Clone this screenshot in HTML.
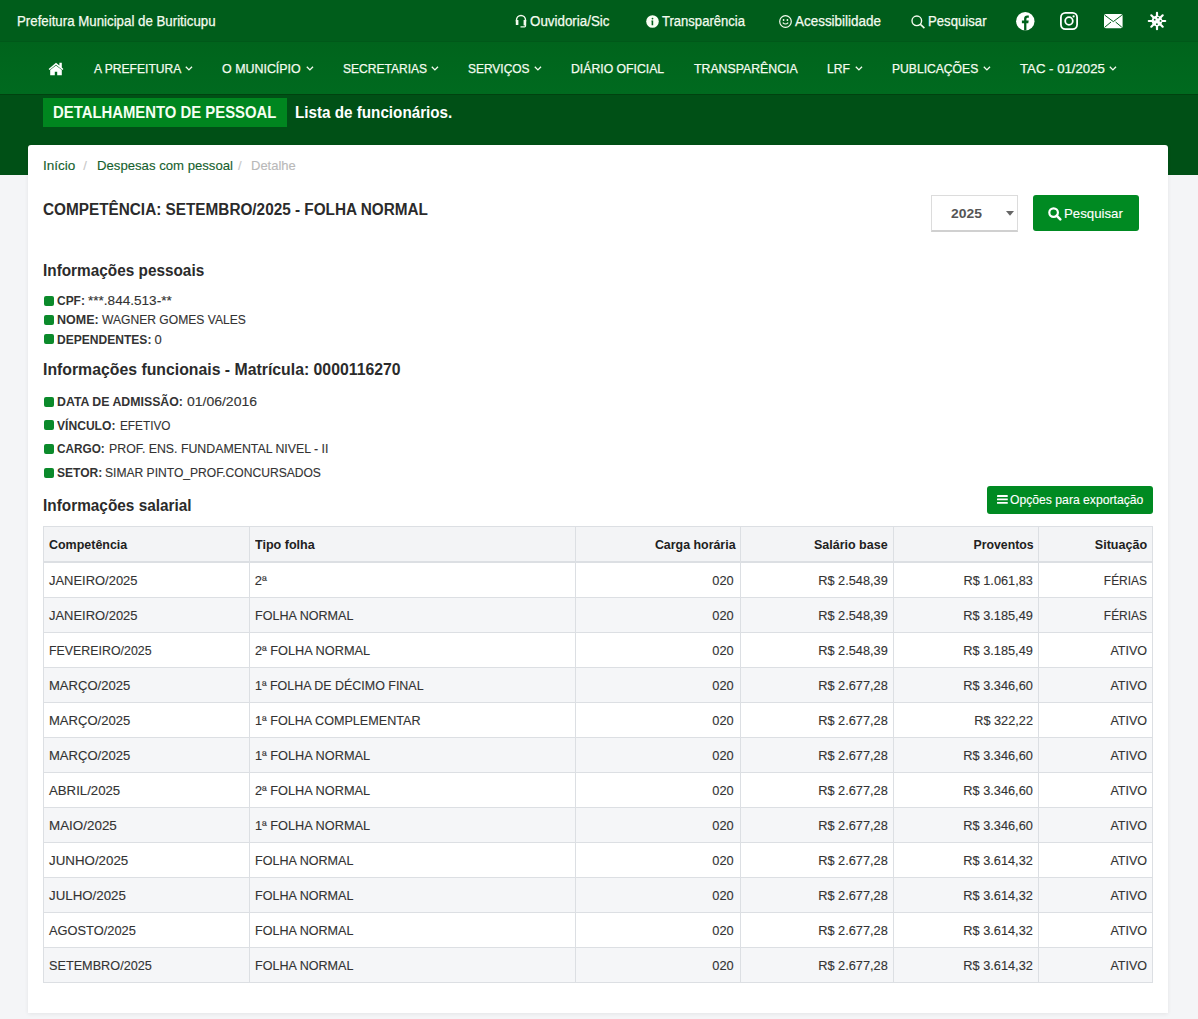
<!DOCTYPE html>
<html lang="pt-BR"><head><meta charset="utf-8">
<title>Detalhamento de Pessoal</title>
<style>
html,body{margin:0;padding:0}
body{width:1198px;height:1019px;position:relative;overflow:hidden;background:#f4f5f7;font-family:"Liberation Sans",sans-serif}
.a{position:absolute}
.t{position:absolute;white-space:nowrap;font-family:"Liberation Sans",sans-serif}
#top{left:0;top:0;width:1198px;height:42px;background:#005d1b}
#nav{left:0;top:42px;width:1198px;height:52px;background:linear-gradient(#00641c,#006a1f)}
#band{left:0;top:94px;width:1198px;height:81px;background:#005016;border-top:1px solid #00420f;box-sizing:border-box}
#label{left:43px;top:98px;width:244px;height:29px;background:#00861f}
#card{left:28px;top:145px;width:1140px;height:868px;background:#fff;border-radius:3px 3px 0 0;box-shadow:0 1px 4px rgba(0,0,0,.07)}
#sel{left:931px;top:195px;width:85px;height:34px;border:1px solid #dcdcdc;border-bottom:2px solid #d0d0d0;background:#fff}
#btn{left:1033px;top:195px;width:106px;height:36px;background:#008a22;border-radius:3px}
#exp{left:987px;top:486px;width:166px;height:28px;background:#008a22;border-radius:3px}
.sq{position:absolute;left:43.5px;width:10.5px;height:10px;background:#0b8a2b;border-radius:2px}
#tbl{left:43px;top:526px;width:1110px;height:456px}
.hl{position:absolute;background:#dcdfe3}
.row{position:absolute;left:43px;width:1110px;height:35px}
svg{position:absolute;overflow:visible}
</style></head><body>
<div id="top" class="a"></div>
<div id="nav" class="a"></div>
<div class="a" style="left:0;top:41px;width:1198px;height:1px;background:#005819"></div>
<div id="band" class="a"></div>
<div id="label" class="a"></div>
<div id="card" class="a"></div>
<div id="sel" class="a"></div>
<div id="btn" class="a"></div>
<div id="exp" class="a"></div>

<!-- squares -->
<div class="sq" style="top:295.5px"></div>
<div class="sq" style="top:314.5px"></div>
<div class="sq" style="top:334px"></div>
<div class="sq" style="top:396.5px"></div>
<div class="sq" style="top:420px"></div>
<div class="sq" style="top:444px"></div>
<div class="sq" style="top:468px"></div>

<!-- table backgrounds -->
<div class="row" style="top:526px;height:36px;background:#f3f4f6"></div>
<div class="row" style="top:597px;background:#f5f6f8"></div>
<div class="row" style="top:667px;background:#f5f6f8"></div>
<div class="row" style="top:737px;background:#f5f6f8"></div>
<div class="row" style="top:807px;background:#f5f6f8"></div>
<div class="row" style="top:877px;background:#f5f6f8"></div>
<div class="row" style="top:947px;background:#f5f6f8"></div>
<!-- table lines -->
<div class="hl" style="left:43px;top:526px;width:1110px;height:1px"></div>
<div class="hl" style="left:43px;top:561px;width:1110px;height:2px"></div>
<div class="hl" style="left:43px;top:597px;width:1110px;height:1px"></div>
<div class="hl" style="left:43px;top:632px;width:1110px;height:1px"></div>
<div class="hl" style="left:43px;top:667px;width:1110px;height:1px"></div>
<div class="hl" style="left:43px;top:702px;width:1110px;height:1px"></div>
<div class="hl" style="left:43px;top:737px;width:1110px;height:1px"></div>
<div class="hl" style="left:43px;top:772px;width:1110px;height:1px"></div>
<div class="hl" style="left:43px;top:807px;width:1110px;height:1px"></div>
<div class="hl" style="left:43px;top:842px;width:1110px;height:1px"></div>
<div class="hl" style="left:43px;top:877px;width:1110px;height:1px"></div>
<div class="hl" style="left:43px;top:912px;width:1110px;height:1px"></div>
<div class="hl" style="left:43px;top:947px;width:1110px;height:1px"></div>
<div class="hl" style="left:43px;top:982px;width:1110px;height:1px"></div>
<div class="hl" style="left:43px;top:526px;width:1px;height:457px"></div>
<div class="hl" style="left:249px;top:526px;width:1px;height:457px"></div>
<div class="hl" style="left:575px;top:526px;width:1px;height:457px"></div>
<div class="hl" style="left:740px;top:526px;width:1px;height:457px"></div>
<div class="hl" style="left:893px;top:526px;width:1px;height:457px"></div>
<div class="hl" style="left:1038px;top:526px;width:1px;height:457px"></div>
<div class="hl" style="left:1152px;top:526px;width:1px;height:457px"></div>

<!-- icons -->
<!-- home -->
<svg style="left:48px;top:62px" width="16" height="14" viewBox="0 0 16 14">
<path d="M8 0.8 L0.6 7 L1.6 8.1 L8 2.8 L14.4 8.1 L15.4 7 L13.8 5.6 L13.8 0.7 L11.4 0.7 L11.4 3.6 Z" fill="#fff"/>
<path d="M2.2 8 L8 3.4 L13.8 8 L13.8 13.3 L9.2 13.3 L9.2 9.8 L6.8 9.8 L6.8 13.3 L2.2 13.3 Z" fill="#fff"/>
</svg>
<!-- chevrons -->
<svg style="left:185px;top:66px" width="8" height="5" viewBox="0 0 8 5"><path d="M0.8 0.8 L3.9 3.9 L7 0.8" stroke="#f4fbef" stroke-width="1.35" fill="none"/></svg>
<svg style="left:305.5px;top:66px" width="8" height="5" viewBox="0 0 8 5"><path d="M0.8 0.8 L3.9 3.9 L7 0.8" stroke="#f4fbef" stroke-width="1.35" fill="none"/></svg>
<svg style="left:431px;top:66px" width="8" height="5" viewBox="0 0 8 5"><path d="M0.8 0.8 L3.9 3.9 L7 0.8" stroke="#f4fbef" stroke-width="1.35" fill="none"/></svg>
<svg style="left:534px;top:66px" width="8" height="5" viewBox="0 0 8 5"><path d="M0.8 0.8 L3.9 3.9 L7 0.8" stroke="#f4fbef" stroke-width="1.35" fill="none"/></svg>
<svg style="left:854.6px;top:66px" width="8" height="5" viewBox="0 0 8 5"><path d="M0.8 0.8 L3.9 3.9 L7 0.8" stroke="#f4fbef" stroke-width="1.35" fill="none"/></svg>
<svg style="left:982.6px;top:66px" width="8" height="5" viewBox="0 0 8 5"><path d="M0.8 0.8 L3.9 3.9 L7 0.8" stroke="#f4fbef" stroke-width="1.35" fill="none"/></svg>
<svg style="left:1108.5px;top:66px" width="8" height="5" viewBox="0 0 8 5"><path d="M0.8 0.8 L3.9 3.9 L7 0.8" stroke="#f4fbef" stroke-width="1.35" fill="none"/></svg>
<!-- headset -->
<svg style="left:515px;top:14px" width="12" height="14" viewBox="0 0 12 14">
<path d="M1.5 7.5 V6 A4.5 4.5 0 0 1 10.5 6 V7.5" stroke="#f4fbef" stroke-width="1.4" fill="none"/>
<rect x="0.8" y="6" width="2.6" height="5" rx="0.6" fill="#f4fbef"/>
<rect x="8.6" y="6" width="2.6" height="5.5" rx="0.6" fill="#f4fbef"/>
<path d="M10.5 11 V12 Q10.5 12.8 9.6 12.8 H5.5" stroke="#f4fbef" stroke-width="1.2" fill="none"/>
</svg>
<!-- info -->
<svg style="left:646px;top:14.8px" width="13" height="13" viewBox="0 0 13 13">
<circle cx="6.5" cy="6.5" r="6.3" fill="#f8fff4"/>
<circle cx="6.5" cy="3.6" r="0.9" fill="#00601c"/>
<path d="M5.4 5.4 H7.2 V10.2 H5.6 V6.4 H5.4 Z" fill="#00601c"/>
</svg>
<!-- smile -->
<svg style="left:779px;top:14.8px" width="13" height="13" viewBox="0 0 13 13">
<circle cx="6.5" cy="6.5" r="5.8" stroke="#f4fbef" stroke-width="1.2" fill="none"/>
<circle cx="4.6" cy="5" r="0.9" fill="#f4fbef"/><circle cx="8.4" cy="5" r="0.9" fill="#f4fbef"/>
<path d="M3.8 7.6 Q6.5 10.4 9.2 7.6" stroke="#f4fbef" stroke-width="1.2" fill="none"/>
</svg>
<!-- search top -->
<svg style="left:911px;top:14.5px" width="15" height="14" viewBox="0 0 15 14">
<circle cx="5.8" cy="5.8" r="4.8" stroke="#f4fbef" stroke-width="1.4" fill="none"/>
<path d="M9.2 9.2 L13.4 13.2" stroke="#f4fbef" stroke-width="1.6" fill="none"/>
</svg>
<!-- facebook -->
<svg style="left:1015.5px;top:11.7px" width="19" height="19" viewBox="0 0 19 19">
<circle cx="9.3" cy="9.3" r="9.2" fill="#fff"/>
<path d="M8.1 18.6 V11.2 H5.9 V8.6 H8.1 V6.6 C8.1 4.5 9.4 3.4 11.2 3.4 C12 3.4 12.8 3.5 12.8 3.5 V5.7 H11.7 C10.7 5.7 10.4 6.3 10.4 7 V8.6 H12.7 L12.3 11.2 H10.4 V18.6 Z" fill="#00601c"/>
</svg>
<!-- instagram -->
<svg style="left:1060px;top:11.8px" width="18" height="18" viewBox="0 0 18 18">
<rect x="0.9" y="0.9" width="16.2" height="16.2" rx="4.5" stroke="#fff" stroke-width="1.8" fill="none"/>
<circle cx="9" cy="9" r="3.8" stroke="#fff" stroke-width="1.8" fill="none"/>
<circle cx="13.6" cy="4.4" r="1.1" fill="#fff"/>
</svg>
<!-- mail -->
<svg style="left:1104px;top:13.8px" width="19" height="15" viewBox="0 0 19 15">
<rect x="0" y="0" width="18.6" height="14.3" rx="1.8" fill="#fff"/>
<path d="M0.8 1.2 L9.3 7.6 L17.8 1.2 M0.8 13.2 L7 8 M17.8 13.2 L11.6 8" stroke="#005d1b" stroke-width="1" fill="none"/>
</svg>
<!-- virus -->
<svg style="left:1147px;top:11px" width="20" height="20" viewBox="0 0 20 20">
<g stroke="#fff" stroke-width="2.2" stroke-linecap="round">
<path d="M10 1.8 V18.2 M1.8 10 H18.2 M4.3 4.3 L15.7 15.7 M15.7 4.3 L4.3 15.7"/>
</g>
<circle cx="10" cy="10" r="5.4" fill="#fff"/>
<circle cx="11" cy="6.6" r="0.9" fill="#00601c"/><circle cx="7.7" cy="8.7" r="0.9" fill="#00601c"/>
<circle cx="13.5" cy="9.9" r="0.9" fill="#00601c"/><circle cx="9.9" cy="13.2" r="0.9" fill="#00601c"/>
</svg>
<!-- select caret -->
<svg style="left:1006px;top:210.5px" width="8" height="5" viewBox="0 0 8 5"><path d="M0 0 H8 L4 4.8 Z" fill="#666"/></svg>
<!-- search btn -->
<svg style="left:1048px;top:207px" width="14" height="14" viewBox="0 0 14 14">
<circle cx="5.6" cy="5.6" r="4.3" stroke="#fff" stroke-width="2.2" fill="none"/>
<path d="M8.6 8.6 L12.3 12.3" stroke="#fff" stroke-width="2.6" stroke-linecap="round"/>
</svg>
<!-- bars -->
<svg style="left:996.7px;top:495.4px" width="11" height="9" viewBox="0 0 11 9">
<rect x="0" y="0" width="10.8" height="1.9" rx="0.4" fill="#fff"/>
<rect x="0" y="3.45" width="10.8" height="1.9" rx="0.4" fill="#fff"/>
<rect x="0" y="6.9" width="10.8" height="1.9" rx="0.4" fill="#fff"/>
</svg>


<span class="t" style="top:14.15px;font-size:14px;line-height:14px;font-weight:400;color:#f4fbef;-webkit-text-stroke:0.25px #f4fbef;transform:scaleX(0.9484);transform-origin:left top;left:16.94px;">Prefeitura Municipal de Buriticupu</span>
<span class="t" style="top:14.15px;font-size:14px;line-height:14px;font-weight:400;color:#f4fbef;-webkit-text-stroke:0.25px #f4fbef;transform:scaleX(0.9542);transform-origin:left top;left:530.33px;">Ouvidoria/Sic</span>
<span class="t" style="top:14.15px;font-size:14px;line-height:14px;font-weight:400;color:#f4fbef;-webkit-text-stroke:0.25px #f4fbef;transform:scaleX(0.9320);transform-origin:left top;left:662.35px;">Transparência</span>
<span class="t" style="top:14.15px;font-size:14px;line-height:14px;font-weight:400;color:#f4fbef;-webkit-text-stroke:0.25px #f4fbef;transform:scaleX(0.9605);transform-origin:left top;left:795.33px;">Acessibilidade</span>
<span class="t" style="top:14.15px;font-size:14px;line-height:14px;font-weight:400;color:#f4fbef;-webkit-text-stroke:0.25px #f4fbef;transform:scaleX(0.9402);transform-origin:left top;left:927.74px;">Pesquisar</span>
<span class="t" style="top:62.00px;font-size:13px;line-height:13px;font-weight:400;color:#f4fbef;-webkit-text-stroke:0.25px #f4fbef;transform:scaleX(0.9298);transform-origin:left top;left:93.95px;">A PREFEITURA</span>
<span class="t" style="top:62.00px;font-size:13px;line-height:13px;font-weight:400;color:#f4fbef;-webkit-text-stroke:0.25px #f4fbef;transform:scaleX(0.9564);transform-origin:left top;left:222.33px;">O MUNICÍPIO</span>
<span class="t" style="top:62.00px;font-size:13px;line-height:13px;font-weight:400;color:#f4fbef;-webkit-text-stroke:0.25px #f4fbef;transform:scaleX(0.9256);transform-origin:left top;left:343.15px;">SECRETARIAS</span>
<span class="t" style="top:62.00px;font-size:13px;line-height:13px;font-weight:400;color:#f4fbef;-webkit-text-stroke:0.25px #f4fbef;transform:scaleX(0.9188);transform-origin:left top;left:468.36px;">SERVIÇOS</span>
<span class="t" style="top:62.00px;font-size:13px;line-height:13px;font-weight:400;color:#f4fbef;-webkit-text-stroke:0.25px #f4fbef;transform:scaleX(0.9411);transform-origin:left top;left:570.94px;">DIÁRIO OFICIAL</span>
<span class="t" style="top:62.00px;font-size:13px;line-height:13px;font-weight:400;color:#f4fbef;-webkit-text-stroke:0.25px #f4fbef;transform:scaleX(0.9469);transform-origin:left top;left:694.34px;">TRANSPARÊNCIA</span>
<span class="t" style="top:62.00px;font-size:13px;line-height:13px;font-weight:400;color:#f4fbef;-webkit-text-stroke:0.25px #f4fbef;transform:scaleX(0.9337);transform-origin:left top;left:827.35px;">LRF</span>
<span class="t" style="top:62.00px;font-size:13px;line-height:13px;font-weight:400;color:#f4fbef;-webkit-text-stroke:0.25px #f4fbef;transform:scaleX(0.9324);transform-origin:left top;left:891.95px;">PUBLICAÇÕES</span>
<span class="t" style="top:62.00px;font-size:13px;line-height:13px;font-weight:400;color:#f4fbef;-webkit-text-stroke:0.25px #f4fbef;transform:scaleX(1.0158);transform-origin:left top;left:1019.89px;">TAC - 01/2025</span>
<span class="t" style="top:103.61px;font-size:17px;line-height:17px;font-weight:700;color:#f6fff2;transform:scaleX(0.8748);transform-origin:left top;left:53.09px;">DETALHAMENTO DE PESSOAL</span>
<span class="t" style="top:103.61px;font-size:17px;line-height:17px;font-weight:700;color:#ffffff;transform:scaleX(0.8952);transform-origin:left top;left:295.37px;">Lista de funcionários.</span>
<span class="t" style="top:159.00px;font-size:13px;line-height:13px;font-weight:400;color:#165f2e;-webkit-text-stroke:0.12px #165f2e;transform:scaleX(1.0406);transform-origin:left top;left:42.57px;">Início</span>
<span class="t" style="top:159.00px;font-size:13px;line-height:13px;font-weight:400;color:#c8c8c8;-webkit-text-stroke:0.12px #c8c8c8;left:83.30px;">/</span>
<span class="t" style="top:159.00px;font-size:13px;line-height:13px;font-weight:400;color:#165f2e;-webkit-text-stroke:0.12px #165f2e;transform:scaleX(1.0119);transform-origin:left top;left:96.79px;">Despesas com pessoal</span>
<span class="t" style="top:159.00px;font-size:13px;line-height:13px;font-weight:400;color:#c8c8c8;-webkit-text-stroke:0.12px #c8c8c8;left:238.10px;">/</span>
<span class="t" style="top:159.00px;font-size:13px;line-height:13px;font-weight:400;color:#b9b9b9;-webkit-text-stroke:0.12px #b9b9b9;transform:scaleX(0.9997);transform-origin:left top;left:251.30px;">Detalhe</span>
<span class="t" style="top:202.46px;font-size:16px;line-height:16px;font-weight:700;color:#2b2b2b;transform:scaleX(0.9574);transform-origin:left top;left:42.63px;">COMPETÊNCIA: SETEMBRO/2025 - FOLHA NORMAL</span>
<span class="t" style="top:207.00px;font-size:13px;line-height:13px;font-weight:700;color:#555555;transform:scaleX(1.0673);transform-origin:left top;left:951.45px;">2025</span>
<span class="t" style="top:207.00px;font-size:13px;line-height:13px;font-weight:400;color:#ffffff;-webkit-text-stroke:0.12px #ffffff;transform:scaleX(1.0174);transform-origin:left top;left:1063.89px;">Pesquisar</span>
<span class="t" style="top:261.61px;font-size:17px;line-height:17px;font-weight:700;color:#2b2b2b;transform:scaleX(0.9027);transform-origin:left top;left:42.67px;">Informações pessoais</span>
<span class="t" style="top:360.91px;font-size:17px;line-height:17px;font-weight:700;color:#2b2b2b;transform:scaleX(0.9300);transform-origin:left top;left:42.85px;">Informações funcionais - Matrícula: 0000116270</span>
<span class="t" style="top:496.91px;font-size:17px;line-height:17px;font-weight:700;color:#2b2b2b;transform:scaleX(0.9038);transform-origin:left top;left:43.17px;">Informações salarial</span>
<span class="t" style="top:492.90px;font-size:13px;line-height:13px;font-weight:400;color:#ffffff;-webkit-text-stroke:0.12px #ffffff;transform:scaleX(0.9365);transform-origin:left top;left:1009.54px;">Opções para exportação</span>
<span class="t" style="top:294.00px;font-size:13px;line-height:13px;font-weight:700;color:#333333;transform:scaleX(0.9201);transform-origin:left top;left:57.36px;">CPF:</span>
<span class="t" style="top:294.00px;font-size:13px;line-height:13px;font-weight:400;color:#333333;-webkit-text-stroke:0.12px #333333;transform:scaleX(1.0437);transform-origin:left top;left:88.47px;">***.844.513-**</span>
<span class="t" style="top:313.00px;font-size:13px;line-height:13px;font-weight:700;color:#333333;transform:scaleX(0.9612);transform-origin:left top;left:57.33px;">NOME:</span>
<span class="t" style="top:313.00px;font-size:13px;line-height:13px;font-weight:400;color:#333333;-webkit-text-stroke:0.12px #333333;transform:scaleX(0.9304);transform-origin:left top;left:102.25px;">WAGNER GOMES VALES</span>
<span class="t" style="top:332.50px;font-size:13px;line-height:13px;font-weight:700;color:#333333;transform:scaleX(0.9270);transform-origin:left top;left:57.35px;">DEPENDENTES:</span>
<span class="t" style="top:332.50px;font-size:13px;line-height:13px;font-weight:400;color:#333333;-webkit-text-stroke:0.12px #333333;left:154.50px;">0</span>
<span class="t" style="top:395.40px;font-size:13px;line-height:13px;font-weight:700;color:#333333;transform:scaleX(0.9478);transform-origin:left top;left:57.34px;">DATA DE ADMISSÃO:</span>
<span class="t" style="top:395.40px;font-size:13px;line-height:13px;font-weight:400;color:#333333;-webkit-text-stroke:0.12px #333333;transform:scaleX(1.0752);transform-origin:left top;left:186.55px;">01/06/2016</span>
<span class="t" style="top:418.50px;font-size:13px;line-height:13px;font-weight:700;color:#333333;transform:scaleX(0.9298);transform-origin:left top;left:57.35px;">VÍNCULO:</span>
<span class="t" style="top:418.50px;font-size:13px;line-height:13px;font-weight:400;color:#333333;-webkit-text-stroke:0.12px #333333;transform:scaleX(0.9080);transform-origin:left top;left:119.56px;">EFETIVO</span>
<span class="t" style="top:442.30px;font-size:13px;line-height:13px;font-weight:700;color:#333333;transform:scaleX(0.9049);transform-origin:left top;left:57.37px;">CARGO:</span>
<span class="t" style="top:442.30px;font-size:13px;line-height:13px;font-weight:400;color:#333333;-webkit-text-stroke:0.12px #333333;transform:scaleX(0.9484);transform-origin:left top;left:108.54px;">PROF. ENS. FUNDAMENTAL NIVEL - II</span>
<span class="t" style="top:466.40px;font-size:13px;line-height:13px;font-weight:700;color:#333333;transform:scaleX(0.9271);transform-origin:left top;left:57.35px;">SETOR:</span>
<span class="t" style="top:466.40px;font-size:13px;line-height:13px;font-weight:400;color:#333333;-webkit-text-stroke:0.12px #333333;transform:scaleX(0.9293);transform-origin:left top;left:105.35px;">SIMAR PINTO_PROF.CONCURSADOS</span>
<span class="t" style="top:538.30px;font-size:13px;line-height:13px;font-weight:700;color:#212121;transform:scaleX(0.9586);transform-origin:left top;left:48.83px;">Competência</span>
<span class="t" style="top:538.30px;font-size:13px;line-height:13px;font-weight:700;color:#212121;transform:scaleX(0.9659);transform-origin:left top;left:254.82px;">Tipo folha</span>
<span class="t" style="top:538.30px;font-size:13px;line-height:13px;font-weight:700;color:#212121;transform:scaleX(0.9540);transform-origin:right top;right:462.83px;">Carga horária</span>
<span class="t" style="top:538.30px;font-size:13px;line-height:13px;font-weight:700;color:#212121;transform:scaleX(0.9615);transform-origin:right top;right:310.33px;">Salário base</span>
<span class="t" style="top:538.30px;font-size:13px;line-height:13px;font-weight:700;color:#212121;transform:scaleX(0.9444);transform-origin:right top;right:164.84px;">Proventos</span>
<span class="t" style="top:538.30px;font-size:13px;line-height:13px;font-weight:700;color:#212121;transform:scaleX(0.9664);transform-origin:right top;right:50.82px;">Situação</span>
<span class="t" style="top:574.00px;font-size:13px;line-height:13px;font-weight:400;color:#333333;-webkit-text-stroke:0.12px #333333;transform:scaleX(0.9957);transform-origin:left top;left:48.80px;">JANEIRO/2025</span>
<span class="t" style="top:574.00px;font-size:13px;line-height:13px;font-weight:400;color:#333333;-webkit-text-stroke:0.12px #333333;left:254.80px;">2ª</span>
<span class="t" style="top:574.00px;font-size:13px;line-height:13px;font-weight:400;color:#333333;-webkit-text-stroke:0.12px #333333;transform:scaleX(0.9854);transform-origin:right top;right:464.01px;">020</span>
<span class="t" style="top:574.00px;font-size:13px;line-height:13px;font-weight:400;color:#333333;-webkit-text-stroke:0.12px #333333;transform:scaleX(0.9836);transform-origin:right top;right:310.31px;">R$ 2.548,39</span>
<span class="t" style="top:574.00px;font-size:13px;line-height:13px;font-weight:400;color:#333333;-webkit-text-stroke:0.12px #333333;transform:scaleX(0.9793);transform-origin:right top;right:164.81px;">R$ 1.061,83</span>
<span class="t" style="top:574.00px;font-size:13px;line-height:13px;font-weight:400;color:#333333;-webkit-text-stroke:0.12px #333333;transform:scaleX(0.9180);transform-origin:right top;right:50.86px;">FÉRIAS</span>
<span class="t" style="top:609.00px;font-size:13px;line-height:13px;font-weight:400;color:#333333;-webkit-text-stroke:0.12px #333333;transform:scaleX(0.9957);transform-origin:left top;left:48.80px;">JANEIRO/2025</span>
<span class="t" style="top:609.00px;font-size:13px;line-height:13px;font-weight:400;color:#333333;-webkit-text-stroke:0.12px #333333;transform:scaleX(0.9667);transform-origin:left top;left:254.82px;">FOLHA NORMAL</span>
<span class="t" style="top:609.00px;font-size:13px;line-height:13px;font-weight:400;color:#333333;-webkit-text-stroke:0.12px #333333;transform:scaleX(0.9854);transform-origin:right top;right:464.01px;">020</span>
<span class="t" style="top:609.00px;font-size:13px;line-height:13px;font-weight:400;color:#333333;-webkit-text-stroke:0.12px #333333;transform:scaleX(0.9836);transform-origin:right top;right:310.31px;">R$ 2.548,39</span>
<span class="t" style="top:609.00px;font-size:13px;line-height:13px;font-weight:400;color:#333333;-webkit-text-stroke:0.12px #333333;transform:scaleX(0.9822);transform-origin:right top;right:164.81px;">R$ 3.185,49</span>
<span class="t" style="top:609.00px;font-size:13px;line-height:13px;font-weight:400;color:#333333;-webkit-text-stroke:0.12px #333333;transform:scaleX(0.9180);transform-origin:right top;right:50.86px;">FÉRIAS</span>
<span class="t" style="top:644.00px;font-size:13px;line-height:13px;font-weight:400;color:#333333;-webkit-text-stroke:0.12px #333333;transform:scaleX(0.9526);transform-origin:left top;left:48.83px;">FEVEREIRO/2025</span>
<span class="t" style="top:644.00px;font-size:13px;line-height:13px;font-weight:400;color:#333333;-webkit-text-stroke:0.12px #333333;transform:scaleX(0.9793);transform-origin:left top;left:254.81px;">2ª FOLHA NORMAL</span>
<span class="t" style="top:644.00px;font-size:13px;line-height:13px;font-weight:400;color:#333333;-webkit-text-stroke:0.12px #333333;transform:scaleX(0.9854);transform-origin:right top;right:464.01px;">020</span>
<span class="t" style="top:644.00px;font-size:13px;line-height:13px;font-weight:400;color:#333333;-webkit-text-stroke:0.12px #333333;transform:scaleX(0.9836);transform-origin:right top;right:310.31px;">R$ 2.548,39</span>
<span class="t" style="top:644.00px;font-size:13px;line-height:13px;font-weight:400;color:#333333;-webkit-text-stroke:0.12px #333333;transform:scaleX(0.9822);transform-origin:right top;right:164.81px;">R$ 3.185,49</span>
<span class="t" style="top:644.00px;font-size:13px;line-height:13px;font-weight:400;color:#333333;-webkit-text-stroke:0.12px #333333;transform:scaleX(0.9636);transform-origin:right top;right:50.83px;">ATIVO</span>
<span class="t" style="top:679.00px;font-size:13px;line-height:13px;font-weight:400;color:#333333;-webkit-text-stroke:0.12px #333333;transform:scaleX(1.0035);transform-origin:left top;left:48.80px;">MARÇO/2025</span>
<span class="t" style="top:679.00px;font-size:13px;line-height:13px;font-weight:400;color:#333333;-webkit-text-stroke:0.12px #333333;transform:scaleX(0.9576);transform-origin:left top;left:254.83px;">1ª FOLHA DE DÉCIMO FINAL</span>
<span class="t" style="top:679.00px;font-size:13px;line-height:13px;font-weight:400;color:#333333;-webkit-text-stroke:0.12px #333333;transform:scaleX(0.9854);transform-origin:right top;right:464.01px;">020</span>
<span class="t" style="top:679.00px;font-size:13px;line-height:13px;font-weight:400;color:#333333;-webkit-text-stroke:0.12px #333333;transform:scaleX(0.9836);transform-origin:right top;right:310.31px;">R$ 2.677,28</span>
<span class="t" style="top:679.00px;font-size:13px;line-height:13px;font-weight:400;color:#333333;-webkit-text-stroke:0.12px #333333;transform:scaleX(0.9822);transform-origin:right top;right:164.81px;">R$ 3.346,60</span>
<span class="t" style="top:679.00px;font-size:13px;line-height:13px;font-weight:400;color:#333333;-webkit-text-stroke:0.12px #333333;transform:scaleX(0.9636);transform-origin:right top;right:50.83px;">ATIVO</span>
<span class="t" style="top:714.00px;font-size:13px;line-height:13px;font-weight:400;color:#333333;-webkit-text-stroke:0.12px #333333;transform:scaleX(1.0035);transform-origin:left top;left:48.80px;">MARÇO/2025</span>
<span class="t" style="top:714.00px;font-size:13px;line-height:13px;font-weight:400;color:#333333;-webkit-text-stroke:0.12px #333333;transform:scaleX(0.9698);transform-origin:left top;left:254.82px;">1ª FOLHA COMPLEMENTAR</span>
<span class="t" style="top:714.00px;font-size:13px;line-height:13px;font-weight:400;color:#333333;-webkit-text-stroke:0.12px #333333;transform:scaleX(0.9854);transform-origin:right top;right:464.01px;">020</span>
<span class="t" style="top:714.00px;font-size:13px;line-height:13px;font-weight:400;color:#333333;-webkit-text-stroke:0.12px #333333;transform:scaleX(0.9836);transform-origin:right top;right:310.31px;">R$ 2.677,28</span>
<span class="t" style="top:714.00px;font-size:13px;line-height:13px;font-weight:400;color:#333333;-webkit-text-stroke:0.12px #333333;transform:scaleX(0.9797);transform-origin:right top;right:164.81px;">R$ 322,22</span>
<span class="t" style="top:714.00px;font-size:13px;line-height:13px;font-weight:400;color:#333333;-webkit-text-stroke:0.12px #333333;transform:scaleX(0.9636);transform-origin:right top;right:50.83px;">ATIVO</span>
<span class="t" style="top:749.00px;font-size:13px;line-height:13px;font-weight:400;color:#333333;-webkit-text-stroke:0.12px #333333;transform:scaleX(1.0035);transform-origin:left top;left:48.80px;">MARÇO/2025</span>
<span class="t" style="top:749.00px;font-size:13px;line-height:13px;font-weight:400;color:#333333;-webkit-text-stroke:0.12px #333333;transform:scaleX(0.9793);transform-origin:left top;left:254.81px;">1ª FOLHA NORMAL</span>
<span class="t" style="top:749.00px;font-size:13px;line-height:13px;font-weight:400;color:#333333;-webkit-text-stroke:0.12px #333333;transform:scaleX(0.9854);transform-origin:right top;right:464.01px;">020</span>
<span class="t" style="top:749.00px;font-size:13px;line-height:13px;font-weight:400;color:#333333;-webkit-text-stroke:0.12px #333333;transform:scaleX(0.9836);transform-origin:right top;right:310.31px;">R$ 2.677,28</span>
<span class="t" style="top:749.00px;font-size:13px;line-height:13px;font-weight:400;color:#333333;-webkit-text-stroke:0.12px #333333;transform:scaleX(0.9822);transform-origin:right top;right:164.81px;">R$ 3.346,60</span>
<span class="t" style="top:749.00px;font-size:13px;line-height:13px;font-weight:400;color:#333333;-webkit-text-stroke:0.12px #333333;transform:scaleX(0.9636);transform-origin:right top;right:50.83px;">ATIVO</span>
<span class="t" style="top:784.00px;font-size:13px;line-height:13px;font-weight:400;color:#333333;-webkit-text-stroke:0.12px #333333;transform:scaleX(1.0158);transform-origin:left top;left:48.79px;">ABRIL/2025</span>
<span class="t" style="top:784.00px;font-size:13px;line-height:13px;font-weight:400;color:#333333;-webkit-text-stroke:0.12px #333333;transform:scaleX(0.9793);transform-origin:left top;left:254.81px;">2ª FOLHA NORMAL</span>
<span class="t" style="top:784.00px;font-size:13px;line-height:13px;font-weight:400;color:#333333;-webkit-text-stroke:0.12px #333333;transform:scaleX(0.9854);transform-origin:right top;right:464.01px;">020</span>
<span class="t" style="top:784.00px;font-size:13px;line-height:13px;font-weight:400;color:#333333;-webkit-text-stroke:0.12px #333333;transform:scaleX(0.9836);transform-origin:right top;right:310.31px;">R$ 2.677,28</span>
<span class="t" style="top:784.00px;font-size:13px;line-height:13px;font-weight:400;color:#333333;-webkit-text-stroke:0.12px #333333;transform:scaleX(0.9822);transform-origin:right top;right:164.81px;">R$ 3.346,60</span>
<span class="t" style="top:784.00px;font-size:13px;line-height:13px;font-weight:400;color:#333333;-webkit-text-stroke:0.12px #333333;transform:scaleX(0.9636);transform-origin:right top;right:50.83px;">ATIVO</span>
<span class="t" style="top:819.00px;font-size:13px;line-height:13px;font-weight:400;color:#333333;-webkit-text-stroke:0.12px #333333;transform:scaleX(1.0314);transform-origin:left top;left:48.78px;">MAIO/2025</span>
<span class="t" style="top:819.00px;font-size:13px;line-height:13px;font-weight:400;color:#333333;-webkit-text-stroke:0.12px #333333;transform:scaleX(0.9793);transform-origin:left top;left:254.81px;">1ª FOLHA NORMAL</span>
<span class="t" style="top:819.00px;font-size:13px;line-height:13px;font-weight:400;color:#333333;-webkit-text-stroke:0.12px #333333;transform:scaleX(0.9854);transform-origin:right top;right:464.01px;">020</span>
<span class="t" style="top:819.00px;font-size:13px;line-height:13px;font-weight:400;color:#333333;-webkit-text-stroke:0.12px #333333;transform:scaleX(0.9836);transform-origin:right top;right:310.31px;">R$ 2.677,28</span>
<span class="t" style="top:819.00px;font-size:13px;line-height:13px;font-weight:400;color:#333333;-webkit-text-stroke:0.12px #333333;transform:scaleX(0.9822);transform-origin:right top;right:164.81px;">R$ 3.346,60</span>
<span class="t" style="top:819.00px;font-size:13px;line-height:13px;font-weight:400;color:#333333;-webkit-text-stroke:0.12px #333333;transform:scaleX(0.9636);transform-origin:right top;right:50.83px;">ATIVO</span>
<span class="t" style="top:854.00px;font-size:13px;line-height:13px;font-weight:400;color:#333333;-webkit-text-stroke:0.12px #333333;transform:scaleX(1.0247);transform-origin:left top;left:48.78px;">JUNHO/2025</span>
<span class="t" style="top:854.00px;font-size:13px;line-height:13px;font-weight:400;color:#333333;-webkit-text-stroke:0.12px #333333;transform:scaleX(0.9667);transform-origin:left top;left:254.82px;">FOLHA NORMAL</span>
<span class="t" style="top:854.00px;font-size:13px;line-height:13px;font-weight:400;color:#333333;-webkit-text-stroke:0.12px #333333;transform:scaleX(0.9854);transform-origin:right top;right:464.01px;">020</span>
<span class="t" style="top:854.00px;font-size:13px;line-height:13px;font-weight:400;color:#333333;-webkit-text-stroke:0.12px #333333;transform:scaleX(0.9836);transform-origin:right top;right:310.31px;">R$ 2.677,28</span>
<span class="t" style="top:854.00px;font-size:13px;line-height:13px;font-weight:400;color:#333333;-webkit-text-stroke:0.12px #333333;transform:scaleX(0.9822);transform-origin:right top;right:164.81px;">R$ 3.614,32</span>
<span class="t" style="top:854.00px;font-size:13px;line-height:13px;font-weight:400;color:#333333;-webkit-text-stroke:0.12px #333333;transform:scaleX(0.9636);transform-origin:right top;right:50.83px;">ATIVO</span>
<span class="t" style="top:889.00px;font-size:13px;line-height:13px;font-weight:400;color:#333333;-webkit-text-stroke:0.12px #333333;transform:scaleX(1.0222);transform-origin:left top;left:48.78px;">JULHO/2025</span>
<span class="t" style="top:889.00px;font-size:13px;line-height:13px;font-weight:400;color:#333333;-webkit-text-stroke:0.12px #333333;transform:scaleX(0.9667);transform-origin:left top;left:254.82px;">FOLHA NORMAL</span>
<span class="t" style="top:889.00px;font-size:13px;line-height:13px;font-weight:400;color:#333333;-webkit-text-stroke:0.12px #333333;transform:scaleX(0.9854);transform-origin:right top;right:464.01px;">020</span>
<span class="t" style="top:889.00px;font-size:13px;line-height:13px;font-weight:400;color:#333333;-webkit-text-stroke:0.12px #333333;transform:scaleX(0.9836);transform-origin:right top;right:310.31px;">R$ 2.677,28</span>
<span class="t" style="top:889.00px;font-size:13px;line-height:13px;font-weight:400;color:#333333;-webkit-text-stroke:0.12px #333333;transform:scaleX(0.9822);transform-origin:right top;right:164.81px;">R$ 3.614,32</span>
<span class="t" style="top:889.00px;font-size:13px;line-height:13px;font-weight:400;color:#333333;-webkit-text-stroke:0.12px #333333;transform:scaleX(0.9636);transform-origin:right top;right:50.83px;">ATIVO</span>
<span class="t" style="top:924.00px;font-size:13px;line-height:13px;font-weight:400;color:#333333;-webkit-text-stroke:0.12px #333333;transform:scaleX(0.9882);transform-origin:left top;left:48.81px;">AGOSTO/2025</span>
<span class="t" style="top:924.00px;font-size:13px;line-height:13px;font-weight:400;color:#333333;-webkit-text-stroke:0.12px #333333;transform:scaleX(0.9667);transform-origin:left top;left:254.82px;">FOLHA NORMAL</span>
<span class="t" style="top:924.00px;font-size:13px;line-height:13px;font-weight:400;color:#333333;-webkit-text-stroke:0.12px #333333;transform:scaleX(0.9854);transform-origin:right top;right:464.01px;">020</span>
<span class="t" style="top:924.00px;font-size:13px;line-height:13px;font-weight:400;color:#333333;-webkit-text-stroke:0.12px #333333;transform:scaleX(0.9836);transform-origin:right top;right:310.31px;">R$ 2.677,28</span>
<span class="t" style="top:924.00px;font-size:13px;line-height:13px;font-weight:400;color:#333333;-webkit-text-stroke:0.12px #333333;transform:scaleX(0.9822);transform-origin:right top;right:164.81px;">R$ 3.614,32</span>
<span class="t" style="top:924.00px;font-size:13px;line-height:13px;font-weight:400;color:#333333;-webkit-text-stroke:0.12px #333333;transform:scaleX(0.9636);transform-origin:right top;right:50.83px;">ATIVO</span>
<span class="t" style="top:959.00px;font-size:13px;line-height:13px;font-weight:400;color:#333333;-webkit-text-stroke:0.12px #333333;transform:scaleX(0.9751);transform-origin:left top;left:48.82px;">SETEMBRO/2025</span>
<span class="t" style="top:959.00px;font-size:13px;line-height:13px;font-weight:400;color:#333333;-webkit-text-stroke:0.12px #333333;transform:scaleX(0.9667);transform-origin:left top;left:254.82px;">FOLHA NORMAL</span>
<span class="t" style="top:959.00px;font-size:13px;line-height:13px;font-weight:400;color:#333333;-webkit-text-stroke:0.12px #333333;transform:scaleX(0.9854);transform-origin:right top;right:464.01px;">020</span>
<span class="t" style="top:959.00px;font-size:13px;line-height:13px;font-weight:400;color:#333333;-webkit-text-stroke:0.12px #333333;transform:scaleX(0.9836);transform-origin:right top;right:310.31px;">R$ 2.677,28</span>
<span class="t" style="top:959.00px;font-size:13px;line-height:13px;font-weight:400;color:#333333;-webkit-text-stroke:0.12px #333333;transform:scaleX(0.9822);transform-origin:right top;right:164.81px;">R$ 3.614,32</span>
<span class="t" style="top:959.00px;font-size:13px;line-height:13px;font-weight:400;color:#333333;-webkit-text-stroke:0.12px #333333;transform:scaleX(0.9636);transform-origin:right top;right:50.83px;">ATIVO</span>
</body></html>
